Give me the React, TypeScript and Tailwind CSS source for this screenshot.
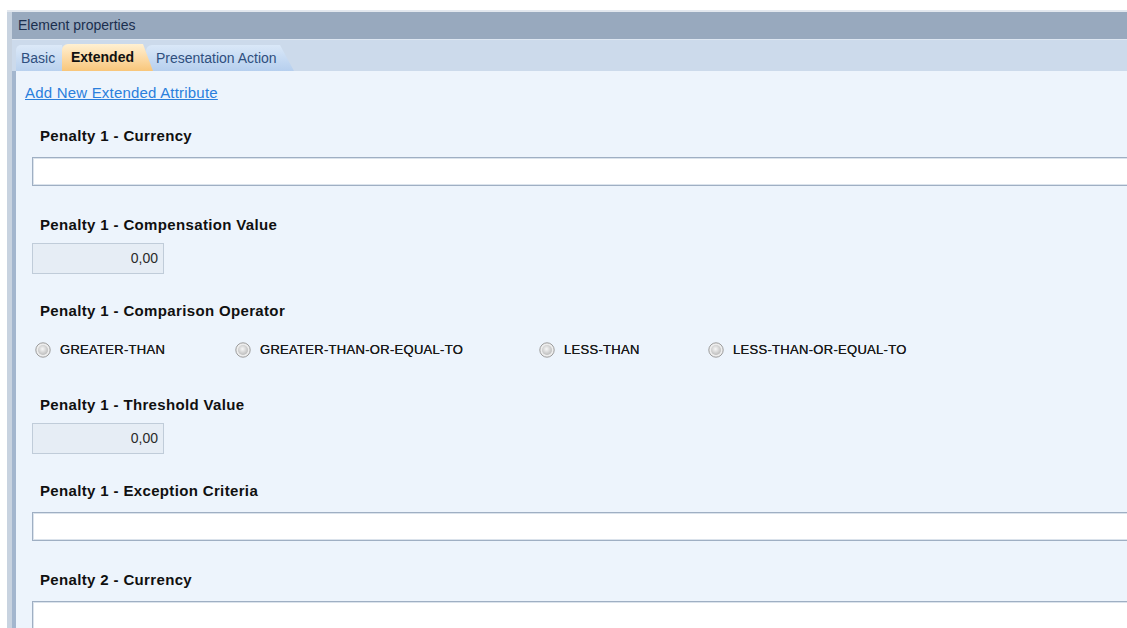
import React from "react";

const labelCls =
  "ml-[24px] h-[20px] leading-[20px] text-[15px] font-bold tracking-[0.35px] text-[#101010]";
const textBoxCls =
  "ml-[16px] h-[29px] w-[1130px] shrink-0 border border-[#9fafc3] bg-white shadow-[inset_0_0_0_1px_#dbe3ec]";
const numBoxCls =
  "ml-[16px] flex h-[31px] w-[132px] items-center justify-end border border-[#c0ccd9] bg-[#e6edf5] pr-[5px] text-[14px] text-[#2a2a2a]";

function Radio({ label }: { label: string }) {
  return (
    <div className="flex items-center">
      <svg width="16" height="16" viewBox="0 0 16 16">
        <defs>
          <radialGradient id="radioFill" cx="45%" cy="40%" r="60%">
            <stop offset="0" stopColor="#f7f7f7" />
            <stop offset="1" stopColor="#bdbdbd" />
          </radialGradient>
        </defs>
        <circle cx="8" cy="8" r="7.2" fill="#ededed" stroke="#9c9c9c" />
        <circle cx="8" cy="8" r="5" fill="url(#radioFill)" />
      </svg>
      <span className="ml-[9px] text-[13px] tracking-[0.3px] text-[#1a1a1a] [text-shadow:0_0_0.4px_#1a1a1a]">
        {label}
      </span>
    </div>
  );
}

export default function App() {
  return (
    <div
      className="flex h-[628px] w-full overflow-hidden bg-white"
      style={{ fontFamily: '"Liberation Sans", Arial, sans-serif' }}
    >
      <div className="w-[7px] shrink-0" />
      <div className="mt-[10px] flex min-w-0 flex-1 flex-col border-t-2 border-[#e2e7ee]">
        <div className="flex flex-1">
          <div className="w-[5px] shrink-0 bg-[#c8d3e0]" />
          <div className="flex min-w-0 flex-1 flex-col">
            {/* panel title */}
            <div className="flex h-[27px] items-center bg-[#98a9be] pl-[6px] text-[14px] text-[#1b2f4e]">
              Element properties
            </div>

            {/* tab strip */}
            <div className="flex h-[32px] items-end border-t border-[#dde6f1] bg-[#ccdaeb] pl-[4px]">
              <div className="z-0 flex h-[26px] w-[52px] items-center rounded-tl-[5px] bg-gradient-to-b from-[#dce9f8] to-[#b9d1ee] pl-[5px] text-[14px] text-[#2f4f7e] [clip-path:polygon(0_0,calc(100%_-_6px)_0,100%_100%,0_100%)]">
                Basic
              </div>
              <div className="z-20 -ml-[6px] flex h-[27px] w-[91px] items-center rounded-tl-[6px] bg-gradient-to-b from-[#fff0d2] to-[#f8c67a] pl-[9px] text-[14px] font-bold text-[#111] [clip-path:polygon(0_0,calc(100%_-_10px)_0,100%_100%,0_100%)]">
                Extended
              </div>
              <div className="z-10 -ml-[7px] flex h-[26px] w-[148px] items-center rounded-tl-[6px] rounded-tr-[8px] bg-gradient-to-b from-[#dae8f8] to-[#b6cfee] pl-[10px] text-[14px] text-[#2f4f7e] [clip-path:polygon(0_0,calc(100%_-_14px)_0,100%_100%,0_100%)]">
                Presentation Action
              </div>
            </div>

            {/* tab content */}
            <div className="flex flex-1 flex-col border-l-4 border-[#a3b6ce] bg-[#edf4fc]">
              <div className="flex h-[44px] items-center pl-[9px]">
                <a className="cursor-pointer text-[15px] text-[#2a7fdc] underline tracking-[0.2px]">
                  Add New Extended Attribute
                </a>
              </div>

              <div className={`mt-[11px] ${labelCls}`}>Penalty 1 - Currency</div>
              <div className={`mt-[11px] ${textBoxCls}`} />

              <div className={`mt-[29px] ${labelCls}`}>Penalty 1 - Compensation Value</div>
              <div className={`mt-[8px] ${numBoxCls}`}>0,00</div>

              <div className={`mt-[27px] ${labelCls}`}>Penalty 1 - Comparison Operator</div>
              <div className="ml-[19px] mt-[19px] flex h-[20px] items-center">
                <div className="w-[200px] shrink-0">
                  <Radio label="GREATER-THAN" />
                </div>
                <div className="w-[304px] shrink-0">
                  <Radio label="GREATER-THAN-OR-EQUAL-TO" />
                </div>
                <div className="w-[169px] shrink-0">
                  <Radio label="LESS-THAN" />
                </div>
                <div className="shrink-0">
                  <Radio label="LESS-THAN-OR-EQUAL-TO" />
                </div>
              </div>

              <div className={`mt-[35px] ${labelCls}`}>Penalty 1 - Threshold Value</div>
              <div className={`mt-[8px] ${numBoxCls}`}>0,00</div>

              <div className={`mt-[27px] ${labelCls}`}>Penalty 1 - Exception Criteria</div>
              <div className={`mt-[11px] ${textBoxCls}`} />

              <div className={`mt-[29px] ${labelCls}`}>Penalty 2 - Currency</div>
              <div className={`mt-[11px] ${textBoxCls}`} />
            </div>
          </div>
        </div>
      </div>
    </div>
  );
}
